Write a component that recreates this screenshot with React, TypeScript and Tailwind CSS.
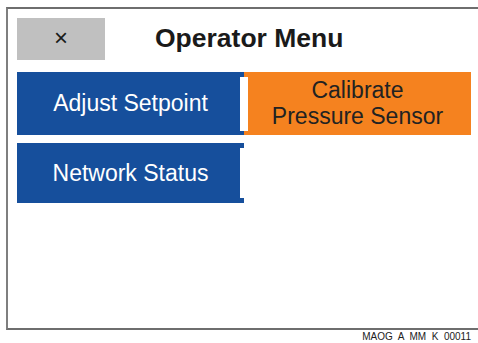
import React from "react";

export default function App() {
  return (
    <div
      className="w-[478px] h-[343px] bg-white relative overflow-hidden"
      style={{ fontFamily: '"Liberation Sans", Arial, sans-serif' }}
    >
      <div className="ml-[6px] mt-[7px] w-[472px] h-[323px] border-l-2 border-t-2 border-b-2 border-l-[#7f7f7f] border-t-[#6e6e6e] border-b-[#6e6e6e] pl-[9px] pt-[9px]">
        <div className="flex items-center h-[42px]">
          <div className="w-[88px] h-[42px] bg-[#c0c0c0] flex items-center justify-center text-[#1a1a1a] text-[24px] leading-none pb-[2px]">
            ×
          </div>
          <div className="ml-[50px] text-[26.5px] font-bold text-[#1a1a1a] leading-none pb-[2px]">
            Operator Menu
          </div>
        </div>
        <div className="mt-[12px] grid grid-cols-[227px_227px] grid-rows-[63px_60px] gap-y-[8px]">
          <div className="relative bg-[#164f9c] text-white text-[23px] flex items-center justify-center z-10">
            Adjust Setpoint
            <div className="absolute left-[223px] top-[5px] bottom-[4px] w-[8px] bg-white" />
          </div>
          <div className="bg-[#f5821f] text-[#222] text-[23px] leading-[26px] flex flex-col items-center justify-center text-center pb-[2px]">
            <span>Calibrate</span>
            <span>Pressure Sensor</span>
          </div>
          <div className="relative bg-[#164f9c] text-white text-[23px] flex items-center justify-center">
            Network Status
            <div className="absolute left-[223px] top-[5px] bottom-[5px] w-[4px] bg-white" />
          </div>
          <div />
        </div>
      </div>
      <div className="absolute right-[7px] top-[331px] text-[10px] leading-[12px] text-[#222] whitespace-pre">
        {"MAOG  A  MM  K  00011"}
      </div>
    </div>
  );
}
